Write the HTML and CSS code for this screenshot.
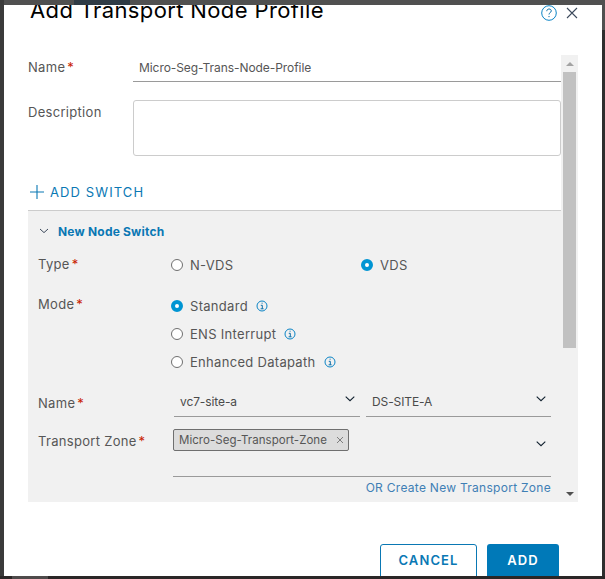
FILE: index.html
```html
<!DOCTYPE html>
<html lang="en">
<head>
<meta charset="utf-8">
<title>Add Transport Node Profile</title>
<link rel="stylesheet" href="styles.css">
</head>
<body>
<div class="dialog">
  <header class="head">
    <h1 class="title">Add Transport Node Profile</h1>
    <svg class="help" width="16" height="16" viewBox="0 0 16 16"><circle cx="8" cy="8" r="7.3" fill="none" stroke="#0a84c6" stroke-width="1"/><path d="M5.8 6.2c0-1.4 1-2.2 2.3-2.2s2.2.8 2.2 1.9c0 1.7-2.3 1.6-2.3 3.6" fill="none" stroke="#0a6fa8" stroke-width="1"/><circle cx="8" cy="11.6" r=".7" fill="#0a6fa8"/></svg>
    <svg class="close" width="12" height="12" viewBox="0 0 12 12"><path d="M1 1l10 10M11 1L1 11" stroke="#3d4a5c" stroke-width="1.1" fill="none"/></svg>
  </header>
  <div class="scrollarea">
    <div class="content">
      <div class="row-name">
        <label class="lbl lbl-top">Name<span class="req">*</span></label>
        <div class="name-value">Micro-Seg-Trans-Node-Profile</div>
      </div>
      <div class="row-desc">
        <label class="lbl">Description</label>
        <div class="textarea"></div>
      </div>
      <div class="add-switch">
        <svg width="14" height="14" viewBox="0 0 14 14"><path d="M7 0v14M0 7h14" stroke="#0a78b4" stroke-width="1.1" fill="none"/></svg>
        <span>ADD SWITCH</span>
      </div>
      <section class="panel">
        <div class="panel-head">
          <svg width="10" height="6" viewBox="0 0 10 6"><path d="M1 1l4 3.6L9 1" stroke="#3d4a5c" stroke-width="1" fill="none"/></svg>
          <span>New Node Switch</span>
        </div>
        <div class="row-type">
          <label class="lbl">Type<span class="req">*</span></label>
          <div class="type-opts">
            <div class="opt"><i class="radio"></i><span>N-VDS</span></div>
            <div class="opt"><i class="radio on"></i><span>VDS</span></div>
          </div>
        </div>
        <div class="row-mode">
          <label class="lbl">Mode<span class="req">*</span></label>
          <div class="mode-opts">
            <div class="opt"><i class="radio on"></i><span>Standard</span><svg class="info" width="12" height="12" viewBox="0 0 12 12"><circle cx="6" cy="6" r="5" fill="none" stroke="#0a84c6"/><path d="M4.8 5.3H6.3V8.8M4.6 8.8H7.6M5.6 3.2h1" fill="none" stroke="#0a6fa8"/></svg></div>
            <div class="opt"><i class="radio"></i><span>ENS Interrupt</span><svg class="info" width="12" height="12" viewBox="0 0 12 12"><circle cx="6" cy="6" r="5" fill="none" stroke="#0a84c6"/><path d="M4.8 5.3H6.3V8.8M4.6 8.8H7.6M5.6 3.2h1" fill="none" stroke="#0a6fa8"/></svg></div>
            <div class="opt"><i class="radio"></i><span>Enhanced Datapath</span><svg class="info" width="12" height="12" viewBox="0 0 12 12"><circle cx="6" cy="6" r="5" fill="none" stroke="#0a84c6"/><path d="M4.8 5.3H6.3V8.8M4.6 8.8H7.6M5.6 3.2h1" fill="none" stroke="#0a6fa8"/></svg></div>
          </div>
        </div>
        <div class="row-select">
          <label class="lbl">Name<span class="req">*</span></label>
          <div class="selects">
            <div class="select s1"><span>vc7-site-a</span><svg width="10" height="6" viewBox="0 0 10 6"><path d="M.7.7l4.3 4 4.3-4" stroke="#10202e" stroke-width="1.1" fill="none"/></svg></div>
            <div class="select s2"><span>DS-SITE-A</span><svg width="10" height="6" viewBox="0 0 10 6"><path d="M.7.7l4.3 4 4.3-4" stroke="#10202e" stroke-width="1.1" fill="none"/></svg></div>
          </div>
        </div>
        <div class="row-zone">
          <label class="lbl">Transport Zone<span class="req">*</span></label>
          <div class="zone">
            <div class="zone-box">
              <div class="chip"><span>Micro-Seg-Transport-Zone</span><svg width="8" height="8" viewBox="0 0 8 8"><path d="M1 1l6 6M7 1L1 7" stroke="#7d7d7d" fill="none"/></svg></div>
              <svg class="zone-caret" width="10" height="6" viewBox="0 0 10 6"><path d="M.7.7l4.3 4 4.3-4" stroke="#10202e" stroke-width="1.1" fill="none"/></svg>
            </div>
            <a class="zone-link">OR Create New Transport Zone</a>
          </div>
        </div>
      </section>
    </div>
    <div class="scrollbar">
      <i class="arrow up"></i>
      <div class="thumb"></div>
      <i class="arrow down"></i>
    </div>
  </div>
  <footer class="foot">
    <button class="btn ghost">CANCEL</button>
    <button class="btn primary">ADD</button>
  </footer>
</div>
</body>
</html>
```
FILE: styles.css
```css
* { box-sizing: border-box; }
html, body { margin: 0; height: 100%; }
body {
  width: 605px; height: 579px; overflow: hidden;
  background:
    linear-gradient(#2f3b45, #2f3b45) 74px 0 / 56px 5px no-repeat,
    linear-gradient(#4f4b4b, #4f4b4b) 12px 576px / 36px 3px no-repeat,
    linear-gradient(#2a2626, #2a2626) 0 576px / 605px 3px no-repeat,
    linear-gradient(#3a3a3a, #3a3a3a) 0 0 / 4px 579px no-repeat,
    linear-gradient(#2e2e2e, #2e2e2e) 602px 30px / 3px 549px no-repeat,
    #505050;
  padding: 5px 3px 0 4px;
  font-family: "Inter", "Liberation Sans", sans-serif;
  color: #565656;
}
.dialog { width: 598px; height: 571px; background: #fff; overflow: hidden; display: flex; flex-direction: column; }
.head { height: 50px; flex: none; display: flex; align-items: flex-start; padding-left: 26px; }
.title { margin: -9px 0 0; font-weight: 400; font-size: 22px; line-height: 28px; color: #000; letter-spacing: .37px; flex: 1; white-space: nowrap; }
.help { margin-top: 0; margin-right: 9px; }
.close { margin-top: 2px; margin-right: 24px; }
.scrollarea { display: flex; height: 447px; flex: none; padding-left: 24px; }
.content { width: 533px; overflow: hidden; flex: none; }
.lbl { font-size: 13px; line-height: 18px; color: #565656; letter-spacing: .3px; }
.req { color: #c92100; margin-left: 2px; }
.row-name { display: flex; height: 27px; margin-bottom: 18px; }
.row-name .lbl { width: 105px; padding-top: 3px; }
.name-value { flex: 1; border-bottom: 1px solid #9a9a9a; font-size: 12px; padding: 4px 0 0 6px; line-height: 18px; color: #565656; letter-spacing: -.07px; }
.row-desc { display: flex; height: 56px; }
.row-desc .lbl { width: 105px; padding-top: 3px; }
.textarea { flex: 1; border: 1px solid #ccc; border-radius: 3px; }
.add-switch { display: flex; align-items: center; gap: 6px; height: 14px; margin: 29px 0 0 2px; color: #0a78b4; font-size: 13px; letter-spacing: 1.1px; }
.panel { margin-top: 11px; background: #f1f1f1; border-top: 1px solid #ccc; height: 292px; padding: 0 10px; }
.panel-head { display: flex; align-items: center; gap: 9px; height: 40px; margin-bottom: 4px; padding: 0 0 0 1px; font-size: 12px; font-weight: 700; color: #0a78b4; letter-spacing: .2px; }
.row-type, .row-mode, .row-select, .row-zone { display: flex; }
.row-type .lbl, .row-mode .lbl, .row-select .lbl, .row-zone .lbl { width: 133px; flex: none; }
.type-opts { display: flex; padding-top: 1px; height: 20px; }
.type-opts .opt { width: 190px; }
.row-type { height: 40px; }
.opt { display: flex; align-items: center; height: 18px; font-size: 13px; letter-spacing: .3px; }
.row-mode { height: 99px; }
.mode-opts { display: flex; flex-direction: column; gap: 10px; padding-top: 2px; }
.radio { width: 12px; height: 12px; border: 1px solid #6f6f6f; border-radius: 50%; margin-right: 7px; background: #fff; flex: none; }
.radio.on { border: 4px solid #0095d3; }
.info { margin-left: 8px; }
.row-select { height: 38px; }
.selects { display: flex; gap: 6px; margin: -1px 0 0 3px; }
.select { display: flex; justify-content: space-between; height: 24px; border-bottom: 1px solid #9a9a9a; font-size: 12px; letter-spacing: -.1px; padding: 0 5px 0 6px; line-height: 18px; color: #4a4a4a; }
.select svg { margin-top: 3px; }
.s1 { width: 186px; }
.s2 { width: 185px; }
.zone { width: 378px; margin: -3px 0 0 2px; }
.zone-box { display: flex; justify-content: space-between; height: 48px; border-bottom: 1px solid #9a9a9a; }
.chip { display: flex; align-items: center; gap: 9px; height: 22px; padding: 0 4px 0 5px; background: #dcdcdc; border: 1px solid #6f6f6f; border-radius: 2px; font-size: 11.5px; letter-spacing: .04px; }
.zone-caret { margin: 12px 5px 0 0; }
.zone-link { display: block; text-align: right; color: #3f7fb5; font-size: 12px; letter-spacing: .28px; line-height: 20px; padding-top: 1px; }
.scrollbar { width: 17px; background: #f1f1f1; display: flex; flex-direction: column; align-items: center; }
.thumb { width: 13px; height: 276px; background: #c1c1c1; flex: none; }
.arrow { width: 0; height: 0; border-left: 4px solid transparent; border-right: 4px solid transparent; flex: none; }
.arrow.up { border-bottom: 4px solid #a3a3a3; margin: 7px 0 6px; }
.arrow.down { border-top: 4px solid #505050; margin-top: auto; margin-bottom: 6px; }
.foot { flex: none; display: flex; justify-content: flex-end; gap: 10px; padding: 42px 43px 0 0; height: 74px; }
.btn { height: 36px; padding: 0 0 4px; border-radius: 3px; font: 600 13px "Inter", sans-serif; letter-spacing: 1.1px; }
.ghost { width: 97px; background: #fff; color: #0a78b4; border: 1px solid #0a78b4; }
.primary { width: 72px; background: #0079b8; color: #fff; border: 0; }
```
